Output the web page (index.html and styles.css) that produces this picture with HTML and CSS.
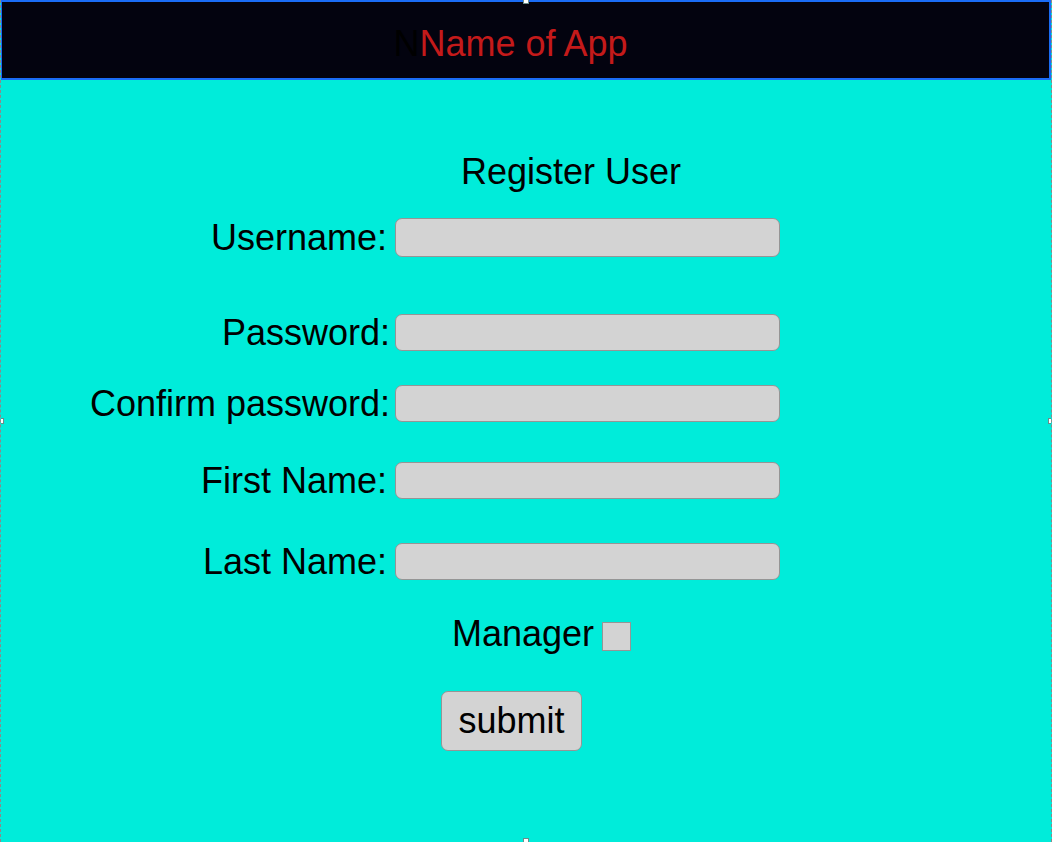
FILE: index.html
```html
<!DOCTYPE html>
<html lang="en">
<head>
<meta charset="utf-8">
<title>Register User</title>
<link rel="stylesheet" href="styles.css">
</head>
<body>
<div class="frame">
  <header class="appbar">
    <h1 class="app-title"><span class="ghost">N</span>Name of App</h1>
  </header>
  <main class="register">
    <h2 class="title">Register User</h2>
    <form class="form">
      <div class="row row-user">
        <label class="label label-inset" for="u">Username:</label>
        <input class="field field-tall" id="u" type="text">
      </div>
      <div class="row row-pass">
        <label class="label" for="p">Password:</label>
        <input class="field" id="p" type="password">
      </div>
      <div class="row row-confirm">
        <label class="label" for="c">Confirm password:</label>
        <input class="field" id="c" type="password">
      </div>
      <div class="row row-first">
        <label class="label label-inset" for="f">First Name:</label>
        <input class="field" id="f" type="text">
      </div>
      <div class="row row-last">
        <label class="label label-inset" for="l">Last Name:</label>
        <input class="field" id="l" type="text">
      </div>
      <div class="manager">
        <label for="m">Manager</label>
        <span class="check" id="m"></span>
      </div>
      <div class="actions">
        <button class="submit" type="button">submit</button>
      </div>
    </form>
  </main>
  <span class="handle h-top"></span>
  <span class="handle h-left"></span>
  <span class="handle h-right"></span>
  <span class="handle h-bottom"></span>
</div>
</body>
</html>
```
FILE: styles.css
```css
html, body {
  margin: 0;
  padding: 0;
  background: #ffffff;
}
body {
  font-family: "Liberation Sans", Arial, Helvetica, sans-serif;
  color: #000;
}
.frame {
  position: relative;
  width: 1052px;
  height: 842px;
  box-sizing: border-box;
  background: #00ecda;
  border-left: 1px dashed #8a8a8a;
  border-right: 1px dashed #8a8a8a;
  overflow: hidden;
}
.appbar {
  height: 80px;
  box-sizing: border-box;
  margin-left: -1px;
  background: #03030f;
  border: 2px solid #1a6cf5;
  display: flex;
  align-items: center;
  justify-content: center;
  padding-top: 8px;
}
.app-title {
  margin: 0;
  padding-right: 30px;
  font-weight: normal;
  font-size: 36px;
  line-height: 40px;
  color: #c41a1a;
}
.ghost {
  color: #000000;
}
.register {
  padding-top: 71px;
}
.title {
  margin: 0;
  padding-left: 460px;
  font-weight: normal;
  font-size: 36px;
  line-height: 42px;
}
.form {
  margin: 0;
}
.row {
  display: flex;
  align-items: center;
}
.label {
  width: 389px;
  box-sizing: border-box;
  text-align: right;
  font-size: 36px;
  line-height: 36px;
  white-space: pre;
}
.label-inset {
  padding-right: 3px;
}
.field {
  margin: 0 0 0 5px;
  width: 385px;
  height: 37px;
  box-sizing: border-box;
  background: #d3d3d3;
  border: 1px solid #959595;
  border-radius: 7px;
  padding: 0 8px;
  font: inherit;
  font-size: 20px;
}
.field-tall {
  height: 39px;
}
.row-user { margin-top: 25px; }
.row-pass { margin-top: 57px; }
.row-confirm { margin-top: 34px; }
.row-first { margin-top: 40px; }
.row-last { margin-top: 44px; }
.manager {
  margin-top: 36px;
  padding-left: 451px;
  display: flex;
  align-items: center;
  gap: 8px;
  font-size: 36px;
  line-height: 36px;
}
.check {
  display: inline-block;
  width: 29px;
  height: 29px;
  box-sizing: border-box;
  background: #d3d3d3;
  border: 1px solid #959595;
  margin-top: 4px;
}
.actions {
  margin-top: 39px;
  padding-left: 440px;
}
.submit {
  width: 141px;
  height: 60px;
  box-sizing: border-box;
  background: #d3d3d3;
  border: 1px solid #959595;
  border-radius: 7px;
  font-family: inherit;
  font-size: 36px;
  color: #000;
  padding: 0;
}
.handle {
  position: absolute;
  width: 6px;
  height: 6px;
  box-sizing: border-box;
  background: #ffffff;
  border: 1px solid #6b8c8a;
}
.h-top { top: -2px; left: 522px; }
.h-bottom { bottom: -2px; left: 522px; }
.h-left { top: 418px; left: -3px; }
.h-right { top: 418px; right: -3px; }
```
